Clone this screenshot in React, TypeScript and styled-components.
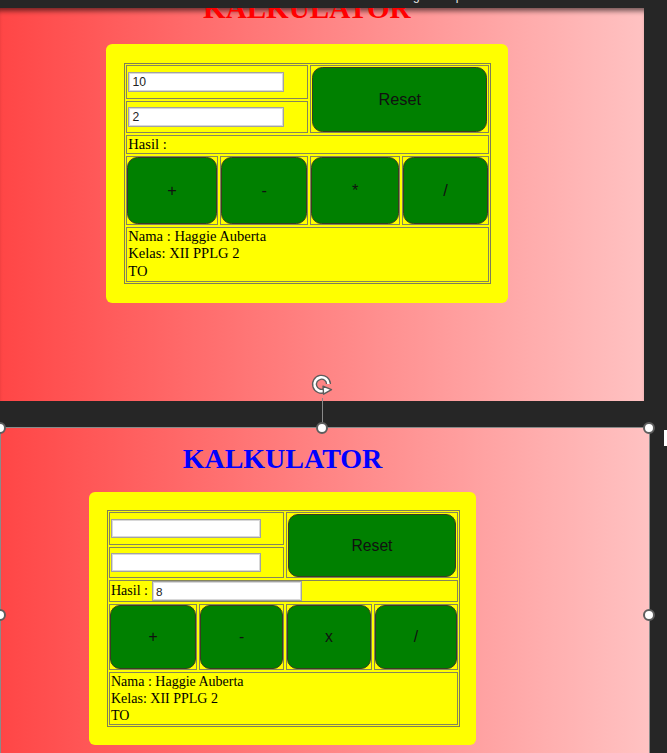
import React from "react";
import styled, { createGlobalStyle } from "styled-components";

const GlobalStyle = createGlobalStyle`
  html, body {
    margin: 0;
    padding: 0;
    background: #262626;
    overflow: hidden;
  }
  * { box-sizing: border-box; }
`;

type CalcProps = {
  first: string;
  second: string;
  hasil?: string;
  timesLabel: string;
};

const Calculator: React.FC<CalcProps> = ({ first, second, hasil, timesLabel }) => {
  return (
    <Card>
      <CalcGrid>
        <Cell $col="1 / 3">
          <Field readOnly value={first} />
        </Cell>
        <Cell $col="3 / 5" $row="1 / 3" $pad="1px 1px 0">
          <GreenButton>Reset</GreenButton>
        </Cell>
        <Cell $col="1 / 3">
          <Field readOnly value={second} />
        </Cell>
        <Cell $col="1 / 5">
          <Label>Hasil :</Label>
          {hasil !== undefined && <Field readOnly value={hasil} $wide />}
        </Cell>
        {["+", "-", timesLabel, "/"].map((op) => (
          <Cell key={op} $pad="0">
            <GreenButton>{op}</GreenButton>
          </Cell>
        ))}
        <InfoCell>
          Nama : Haggie Auberta
          <br />
          Kelas: XII PPLG 2
          <br />
          TO
        </InfoCell>
      </CalcGrid>
    </Card>
  );
};

const RotateIcon = () => (
  <svg width="24" height="24" viewBox="0 0 24 24">
    <path d="M18.5 11 A7 7 0 1 0 14.5 17.6" fill="none" stroke="#5c5c5c" strokeWidth="5.2" />
    <path d="M18.5 11 A7 7 0 1 0 14.5 17.6" fill="none" stroke="#ffffff" strokeWidth="2.6" />
    <polygon points="13,13.2 21.5,16.6 13.6,21.2" fill="#ffffff" stroke="#5c5c5c" strokeWidth="1.4" strokeLinejoin="round" />
  </svg>
);

const App: React.FC = () => {
  return (
    <>
      <GlobalStyle />
      <Desk>
        <Caption>
          <span>g</span>
          <span>p</span>
        </Caption>
        <Stack>
          <Panel $w={644} $h={393} $shadow>
            <Screen $zoom={1.04} $w={590} $top={-15}>
              <Title $color="#ff0000">KALKULATOR</Title>
              <Calculator first="10" second="2" timesLabel="*" />
            </Screen>
          </Panel>
          <Panel $w={650} $h={374} $selected>
            <Screen $zoom={1} $w={563} $top={14.5}>
              <Title $color="#0000ff">KALKULATOR</Title>
              <Calculator first="" second="" hasil="8" timesLabel="x" />
            </Screen>
            <Stem />
            <Rotate>
              <RotateIcon />
            </Rotate>
            <Handle $x={-7} $y={-6} />
            <Handle $x={315} $y={-6} />
            <Handle $x={642} $y={-6} />
            <Handle $x={-7} $y={181} />
            <Handle $x={642} $y={181} />
            <SideTab />
          </Panel>
        </Stack>
      </Desk>
    </>
  );
};

const Desk = styled.div`
  height: 753px;
  overflow: hidden;
  display: flex;
  flex-direction: column;
  background: #262626;
`;

const Caption = styled.div`
  flex: none;
  height: 8px;
  overflow: hidden;
  display: flex;
  gap: 36px;
  padding-left: 413px;
  color: #e8e8e8;
  font-family: "Liberation Sans", Arial, sans-serif;
  font-size: 12px;
  line-height: 12px;
  & span {
    margin-top: -10px;
  }
`;

const Stack = styled.div`
  flex: none;
  display: flex;
  flex-direction: column;
  gap: 26px;
`;

const Panel = styled.div<{ $w: number; $h: number; $shadow?: boolean; $selected?: boolean }>`
  position: relative;
  flex: none;
  width: ${(p) => p.$w}px;
  height: ${(p) => p.$h}px;
  background: linear-gradient(to right, #ff4646, #ffc2c2);
  overflow: ${(p) => (p.$selected ? "visible" : "hidden")};
  border: ${(p) => (p.$selected ? "1px solid #8a8a8a" : "none")};
  box-shadow: ${(p) => (p.$shadow ? "inset 0 6px 5px -3px rgba(0, 0, 0, 0.55)" : "none")};
`;

const Screen = styled.div<{ $zoom: number; $w: number; $top: number }>`
  zoom: ${(p) => p.$zoom};
  width: ${(p) => p.$w}px;
  margin-top: ${(p) => p.$top}px;
  display: flex;
  flex-direction: column;
  align-items: center;
`;

const Title = styled.h1<{ $color: string }>`
  margin: 0 0 17.5px;
  font-family: "Liberation Serif", "Times New Roman", serif;
  font-weight: 700;
  font-size: 28px;
  line-height: 32px;
  color: ${(p) => p.$color};
`;

const Card = styled.div`
  width: 387px;
  padding: 18px;
  background: #ffff00;
  border-radius: 6px;
`;

const CalcGrid = styled.div`
  display: grid;
  grid-template-columns: 88px 85px 86px 84px;
  grid-template-rows: 33px 31px auto 66px auto;
  gap: 2px;
  padding: 1px;
  width: max-content;
  border: 1px solid #7e7e58;
`;

const Cell = styled.div<{ $col?: string; $row?: string; $pad?: string }>`
  grid-column: ${(p) => p.$col ?? "auto"};
  grid-row: ${(p) => p.$row ?? "auto"};
  display: flex;
  align-items: center;
  padding: ${(p) => p.$pad ?? "0 1px"};
  border: 1px solid #85855c;
`;

const InfoCell = styled.div`
  grid-column: 1 / 5;
  padding: 0 1px;
  border: 1px solid #85855c;
  font-family: "Liberation Serif", "Times New Roman", serif;
  font-size: 14px;
  line-height: 17px;
  color: #000;
`;

const Label = styled.span`
  font-family: "Liberation Serif", "Times New Roman", serif;
  font-size: 14px;
  line-height: 16px;
  color: #000;
  white-space: pre;
  margin-right: 4px;
`;

const Field = styled.input<{ $wide?: boolean }>`
  width: 150px;
  height: ${(p) => (p.$wide ? 20 : 19)}px;
  padding: 1px 3px;
  border: 1px solid #a2a2a2;
  box-shadow: inset 0 0 0 1px #d8d8d8;
  background: #ffffff;
  color: #222;
  font-family: "Liberation Sans", Arial, sans-serif;
  font-size: 11.7px;
  outline: none;
`;

const GreenButton = styled.button`
  width: 100%;
  height: 100%;
  padding: 0;
  background: #008000;
  border: 1px solid #3c3c20;
  border-radius: 10px;
  color: #111;
  font-family: "Liberation Sans", Arial, sans-serif;
  font-size: 15.7px;
  cursor: pointer;
`;

const Handle = styled.div<{ $x: number; $y: number }>`
  position: absolute;
  left: ${(p) => p.$x}px;
  top: ${(p) => p.$y}px;
  width: 12px;
  height: 12px;
  border-radius: 50%;
  background: #ffffff;
  border: 2px solid #5e5e5e;
  z-index: 2;
`;

const Stem = styled.div`
  position: absolute;
  left: 321px;
  top: -30px;
  width: 1px;
  height: 30px;
  background: #8a8a8a;
`;

const Rotate = styled.div`
  position: absolute;
  left: 309px;
  top: -55px;
  width: 24px;
  height: 24px;
  display: flex;
  z-index: 2;
`;

const SideTab = styled.div`
  position: absolute;
  left: 663px;
  top: 2px;
  width: 8px;
  height: 16px;
  background: #ffffff;
`;

export default App;
